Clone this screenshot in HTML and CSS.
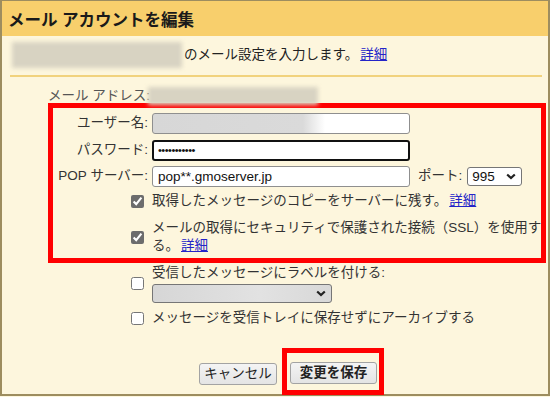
FILE: index.html
```html
<!DOCTYPE html>
<html lang="ja">
<head>
    <meta charset="UTF-8">
    <meta name="viewport" content="width=device-width, initial-scale=1.0">
    <title>メール アカウントを編集</title>
    <link rel="stylesheet" href="styles.css">
</head>
<body>
    <div class="dialog">
        <h1 class="title">メール アカウントを編集</h1>
        <p class="intro"><span class="blur email-blur"></span>のメール設定を入力します。<a href="#">詳細</a></p>
        <hr class="rule">
        <div class="fields">
            <div class="row address-row">
                <span class="label">メール アドレス:</span>
                <span class="blur address-blur"></span>
            </div>
            <div class="highlight">
                <div class="row input-row">
                    <label class="label" for="username">ユーザー名:</label>
                    <input class="text user" id="username" type="text">
                </div>
                <div class="row input-row">
                    <label class="label" for="password">パスワード:</label>
                    <input class="text focused" id="password" type="password" value="abcdefghijk">
                </div>
                <div class="row input-row">
                    <label class="label" for="server">POP サーバー:</label>
                    <div class="server">
                        <input class="text" id="server" type="text" value="pop**.gmoserver.jp">
                        <label class="port-label" for="port">ポート:</label>
                        <select class="select port" id="port">
                            <option>995</option>
                            <option>110</option>
                        </select>
                    </div>
                </div>
                <div class="row check-row">
                    <input type="checkbox" checked>
                    <span>取得したメッセージのコピーをサーバーに残す。<a href="#">詳細</a></span>
                </div>
                <div class="row check-row ssl">
                    <input type="checkbox" checked>
                    <span>メールの取得にセキュリティで保護された接続（SSL）を使用する。<a href="#">詳細</a></span>
                </div>
            </div>
            <div class="row check-row label-row">
                <input type="checkbox">
                <div>
                    <div>受信したメッセージにラベルを付ける:</div>
                    <select class="select label-select">
                        <option></option>
                    </select>
                </div>
            </div>
            <div class="row check-row archive-row">
                <input type="checkbox">
                <span>メッセージを受信トレイに保存せずにアーカイブする</span>
            </div>
        </div>
        <div class="actions">
            <button class="button cancel">キャンセル</button>
            <span class="mark"><button class="button save">変更を保存</button></span>
        </div>
    </div>
</body>
</html>
```

FILE: styles.css
```css
body {
    margin: 0;
    font-family: "Liberation Sans", "Noto Sans CJK JP", sans-serif;
    font-size: 13.5px;
    line-height: 18px;
    color: #222;
    background: #fdf6dd;
}
a {
    color: #2424c8;
}
.dialog {
    width: 550px;
    height: 396px;
    box-sizing: border-box;
    background: #fdf6dd;
    border: 2px solid #9d8d5f;
    border-top-width: 1px;
}
.title {
    margin: 0;
    height: 35px;
    padding-left: 6px;
    background: #f8cf6c;
    font-size: 16.5px;
    line-height: 38px;
    font-weight: bold;
    color: #1a1a1a;
}
.intro {
    display: flex;
    align-items: center;
    height: 26px;
    margin: 6px 0 0 10px;
}
.intro a {
    margin-left: 2px;
}
.blur {
    display: inline-block;
    background: #d8d3c2;
    filter: blur(2px);
}
.email-blur {
    width: 170px;
    height: 26px;
    margin-right: 2px;
}
.rule {
    height: 2px;
    margin: 7px 6px 0 8px;
    border: none;
    background: #f1d27d;
}
.fields {
    display: flex;
    flex-direction: column;
    margin: 0 2px 0 46px;
}
.row {
    display: grid;
    grid-template-columns: 100px 1fr;
    column-gap: 4px;
    align-items: center;
}
.label {
    text-align: right;
    color: #333;
    white-space: nowrap;
}
.address-row {
    height: 18px;
    margin-top: 10px;
}
.address-row .label {
    color: #555;
}
.address-blur {
    width: 170px;
    height: 18px;
    margin-left: -4px;
}
.highlight {
    display: flex;
    flex-direction: column;
    gap: 5px;
    margin-top: -2px;
    padding: 9px 0 8px;
    outline: 5px solid #f00;
    outline-offset: -5px;
}
.input-row {
    height: 22px;
}
.input-row + .input-row + .input-row {
    margin-top: -1px;
}
.text {
    width: 258px;
    height: 21px;
    box-sizing: border-box;
    margin: 0;
    padding: 0 5px;
    border: 1px solid #8f8f8f;
    border-radius: 3px;
    background: #fff;
    font-family: inherit;
    font-size: 13.5px;
    color: #111;
}
.user {
    background: linear-gradient(to right, #d7d7d7 0, #dadada 150px, #fff 172px);
}
.focused {
    border: 2px solid #111;
    outline: none;
    padding-left: 4px;
    font-size: 11px;
    letter-spacing: -0.5px;
}
.server {
    display: flex;
    align-items: center;
}
.port-label {
    margin: 0 5px 0 8px;
    color: #333;
}
.select {
    appearance: none;
    height: 19px;
    box-sizing: border-box;
    margin: 0;
    padding: 0 0 0 4px;
    border: 1px solid #767676;
    border-radius: 3px;
    font-family: inherit;
    font-size: 13.5px;
    color: #111;
    background: #fff url("data:image/svg+xml,%3Csvg xmlns='http://www.w3.org/2000/svg' width='10' height='7'%3E%3Cpath d='M1.2 1.5l3.8 3.6 3.8-3.6' fill='none' stroke='%23222' stroke-width='2.2'/%3E%3C/svg%3E") no-repeat right 5px center;
}
.port {
    width: 55px;
}
.check-row input {
    justify-self: end;
    width: 13px;
    height: 13px;
    margin: 0 4px 0 0;
    accent-color: #6c6c6c;
}
.check-row span,
.check-row div {
    color: #333;
}
.check-row a {
    margin-left: 2px;
}
.ssl {
    margin-top: 4px;
}
.label-row {
    margin-top: 1px;
}
.label-select {
    display: block;
    width: 180px;
    margin-top: 2px;
    background-color: #dcdcdc;
    background-image: url("data:image/svg+xml,%3Csvg xmlns='http://www.w3.org/2000/svg' width='10' height='7'%3E%3Cpath d='M1.2 1.5l3.8 3.6 3.8-3.6' fill='none' stroke='%23222' stroke-width='2.2'/%3E%3C/svg%3E"), linear-gradient(to right, #d6d6d6, #e2e2e2 60%, #d8d8d8);
    background-position: right 5px center, 0 0;
    background-repeat: no-repeat;
}
.archive-row {
    margin-top: 6px;
}
.actions {
    display: flex;
    align-items: flex-end;
    margin: 21px 0 0 197px;
}
.button {
    height: 22px;
    margin: 0;
    padding: 0;
    border: 1px solid #a3a3a3;
    border-radius: 3px;
    background: linear-gradient(#f4f4f4, #e4e4e4);
    font-family: inherit;
    font-size: 13.5px;
    line-height: 20px;
    color: #222;
    white-space: nowrap;
    cursor: pointer;
}
.cancel {
    width: 78px;
    margin-bottom: 10px;
}
.mark {
    margin-left: 5px;
    padding: 9px 2px 6px 3px;
    border: 5px solid #f00;
    line-height: 0;
}
.save {
    width: 87px;
    font-weight: bold;
}
```
